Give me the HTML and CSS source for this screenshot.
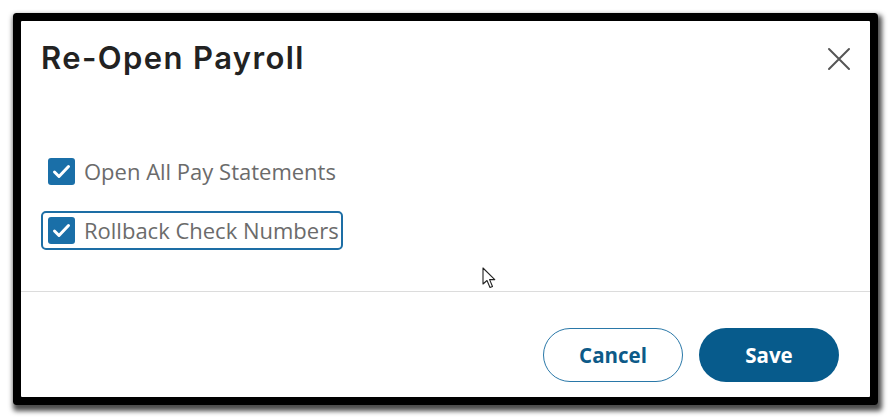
FILE: index.html
```html
<!DOCTYPE html>
<html lang="en">
<head>
<meta charset="utf-8">
<title>Re-Open Payroll</title>
<link rel="stylesheet" href="styles.css">
</head>
<body>
<div class="stage">
  <div class="dialog">
    <div class="header">
      <h1 class="title">Re-Open Payroll</h1>
      <button class="close" aria-label="Close">
        <svg width="24" height="24" viewBox="0 0 24 24"><path d="M2 2 L22 22 M22 2 L2 22" stroke="#555" stroke-width="2" fill="none" stroke-linecap="round"/></svg>
      </button>
    </div>
    <div class="body">
      <label class="row">
        <span class="box"><svg width="27" height="27" viewBox="0 0 27 27"><path d="M6.5 14 L11 18.5 L20.5 8.5" stroke="#fff" stroke-width="3" fill="none" stroke-linecap="round" stroke-linejoin="round"/></svg></span>
        <span class="label">Open All Pay Statements</span>
      </label>
      <label class="row focused">
        <span class="box"><svg width="27" height="27" viewBox="0 0 27 27"><path d="M6.5 14 L11 18.5 L20.5 8.5" stroke="#fff" stroke-width="3" fill="none" stroke-linecap="round" stroke-linejoin="round"/></svg></span>
        <span class="label">Rollback Check Numbers</span>
      </label>
    </div>
    <div class="footer">
      <button class="btn btn-outline">Cancel</button>
      <button class="btn btn-primary">Save</button>
    </div>
    <svg class="cursor" width="14" height="23" viewBox="0 0 14 23"><path d="M1 1 L1 17 L5 13.5 L8 20.5 L10.5 19.5 L7.6 12.6 L12.8 12.6 Z" fill="#fff" stroke="#222" stroke-width="1.1" stroke-linejoin="round"/></svg>
  </div>
</div>
</body>
</html>
```
FILE: styles.css
```css
* { box-sizing: border-box; }
html, body {
  margin: 0;
  padding: 0;
  background: #fff;
  width: 892px;
  height: 418px;
  overflow: hidden;
}
.stage {
  padding: 21px 0 0 21px;
}
.dialog {
  position: relative;
  width: 849px;
  height: 376px;
  background: #fff;
  display: flex;
  flex-direction: column;
  box-shadow: 0 0 0 8px #000, 2px 4px 5px 10px rgba(0,0,0,0.7);
  border-radius: 1px;
}
.header {
  flex: none;
  height: 55px;
  display: flex;
  justify-content: space-between;
  align-items: flex-start;
  padding: 19px 19px 0 20px;
}
.title {
  margin: 0;
  font-family: "Inter", "Lato", sans-serif;
  font-weight: 600;
  font-size: 31px;
  line-height: 36px;
  color: #222;
  letter-spacing: 1.4px;
}
.close {
  border: 0;
  background: none;
  padding: 0;
  margin-top: 7px;
  width: 24px;
  height: 24px;
  cursor: pointer;
}
.body {
  flex: none;
  display: flex;
  flex-direction: column;
  align-items: flex-start;
  gap: 20px;
  padding: 76px 0 0 20px;
  height: 216px;
  border-bottom: 1px solid #dcdcdc;
}
.row {
  display: inline-flex;
  align-items: center;
  gap: 9px;
  padding: 4px 2px 4px 5px;
  border: 2px solid transparent;
  border-radius: 5px;
}
.row.focused {
  border-color: #1d6ea5;
}
.box {
  width: 27px;
  height: 27px;
  background: #1a6fa8;
  border-radius: 3px;
  display: flex;
}
.label {
  font-family: "Open Sans", "Noto Sans", sans-serif;
  font-size: 22px;
  line-height: 27px;
  color: #6b6b6b;
}
.footer {
  flex: none;
  display: flex;
  justify-content: flex-end;
  gap: 16px;
  padding: 36px 31px 0 0;
}
.btn {
  width: 140px;
  height: 54px;
  border-radius: 27px;
  font-family: "Open Sans", "Noto Sans", sans-serif;
  font-weight: 700;
  font-size: 20.5px;
  cursor: pointer;
}
.btn-outline {
  background: #fff;
  border: 1.5px solid #2a78a8;
  color: #0d5a88;
}
.btn-primary {
  background: #075b8c;
  border: 0;
  color: #fff;
}
.cursor {
  position: absolute;
  left: 461px;
  top: 246px;
}
```
